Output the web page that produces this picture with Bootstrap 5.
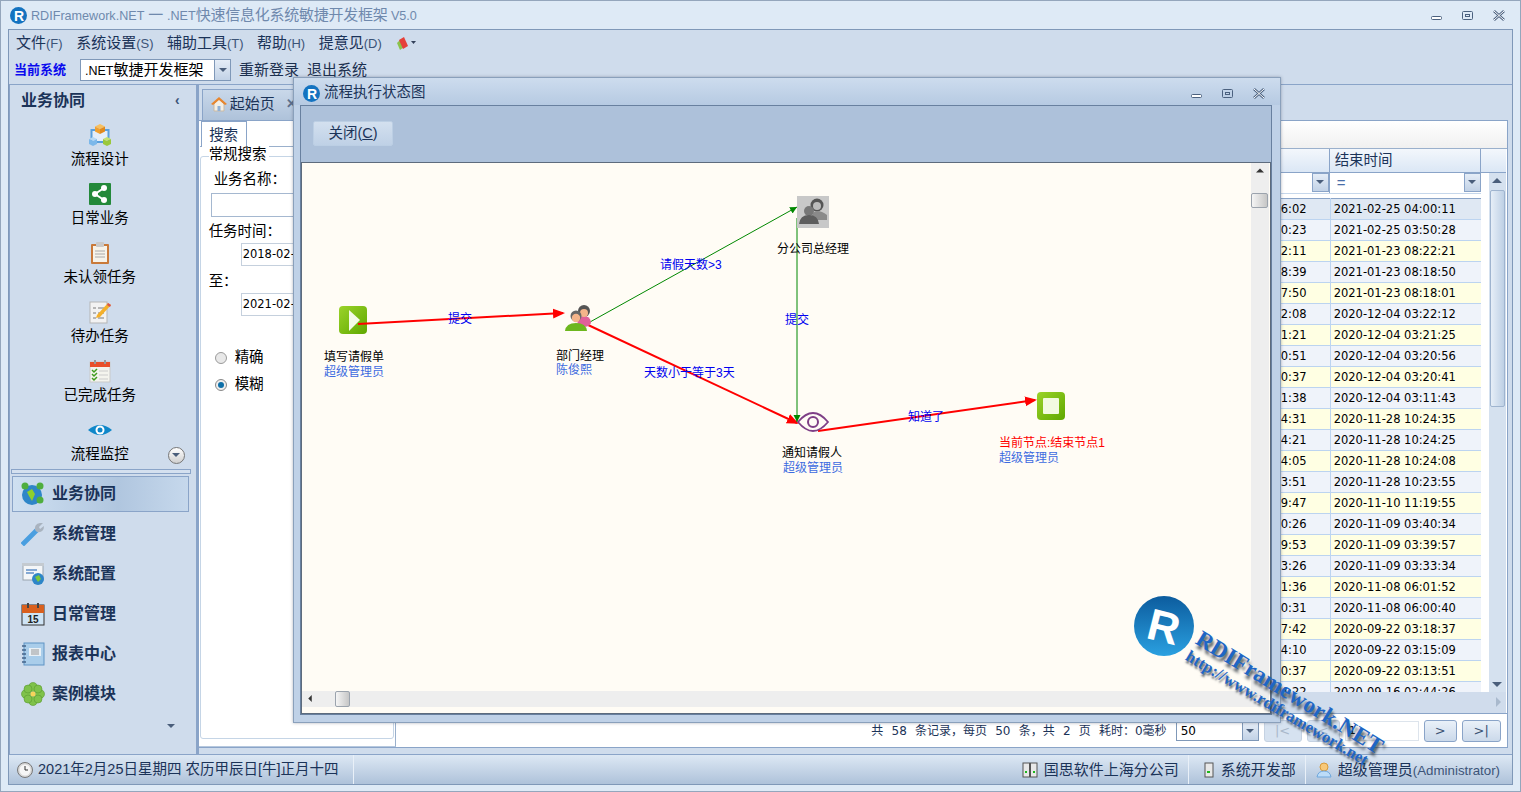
<!DOCTYPE html>
<html lang="zh-CN">
<head>
<meta charset="utf-8">
<title>RDIFramework.NET</title>
<link href="https://cdn.jsdelivr.net/npm/bootstrap@5.3.0/dist/css/bootstrap.min.css" rel="stylesheet">
<style>
html,body{margin:0;height:100%;overflow:hidden}
body{font-family:"Liberation Sans","Noto Sans CJK SC",sans-serif;font-size:14.5px;color:#1b2f4e;background:#deeaf6;line-height:1.2}
svg{display:block;flex:none}
.app-win{width:1521px;height:792px;border:1px solid #94a6bc;position:relative}
.app-title{height:28px;padding-left:9px;color:#6f89ad;font-size:12.6px}
.app-title .cn{font-size:15px;letter-spacing:-.25px}
.win-btns{margin-left:auto;padding-right:15px;gap:20px}
.frame{margin:0 7px;height:756px;border:1px solid #7f98b8;background:#cfdcec}
.menu-row{height:26px;padding-left:7px;gap:13.5px;font-size:15px;color:#1b3358}
.menu-row span span,.lat{color:#3c5478;font-size:13px}
.tool-row{height:29px;padding-left:5px;border-bottom:1px solid #8aa4c8;font-size:15px}
.cur-sys{color:#0a0aee;font-weight:700;font-size:13px;width:66px}
.combo{height:22px;border:1px solid #7f98b8;background:#fff;color:#000}
.combo-arrow{width:16px;height:100%;background:linear-gradient(#e5edf7,#c2d2e6);border-left:1px solid #7f98b8}
.net-t{font-size:12.5px}
.tri{width:0;height:0;border-left:4px solid transparent;border-right:4px solid transparent;border-top:4px solid #4a5e7b}
.main-row{height:670px}
.side{width:190px;border-left:1px solid #8aa4c8;border-right:3px solid #8aa4c8;position:relative}
.side-head{height:30px;padding:1px 16px 0 11px;font-weight:700;font-size:16px;color:#1b3358}
.nav-big{height:59px;color:#000;font-size:14.5px;padding:8px 6px 0 0}
.nav-big svg{height:24px;margin-bottom:0}
.nav-big div{height:24px;line-height:24px}
.more-btn{position:absolute;right:11px;top:362px;width:17px;height:17px;border-radius:50%;border:1px solid #777;background:linear-gradient(#fff,#cfcfcf)}
.side-sep{height:5px;margin:0 5px 2px 1px;background:#d4e0ef;border:1px solid #8aa4c8}
.nav-row{height:40px;padding-left:11px;gap:7px;font-size:16px;font-weight:700;color:#1b3358}
.nav-row.on{height:36px;margin:0 7px 2px 2px;padding-left:8px;border:1px solid #8aa4c8;background:linear-gradient(90deg,#cfe0f1,#b0c6df 60%,#c6d8ec)}
.side-foot{padding:10px 21px 0 0}
.content{width:1316px}
.tab-strip{height:35px;padding:4px 0 0 3px}
.tab-one{width:100px;height:31px;padding-left:8px;padding-bottom:2px;gap:3px;background:linear-gradient(#c9d8ea,#aec2da);border:1px solid #8aa4c8;border-bottom:0;font-size:15px;color:#1b3358}
.panes{height:628px;width:1309px;background:#fff;border:1px solid #8aa4c8;border-left:0;overflow:hidden}
.search-pane{width:197px;position:relative;border-right:1px solid #9ab0cc;border-bottom:1px solid #b6c8de;color:#000;flex:none}
.s-field{position:absolute;left:1px;top:35px;right:1px;bottom:7px;border:1px solid #c5d5e6;border-radius:3px}
.s-tab{position:absolute;left:2px;top:0;width:46px;height:26px;border:1px solid #8aa4c8;border-bottom:0;background:#fff;line-height:26px;text-align:center;font-size:14.5px;color:#1b3358}
.s-line{position:absolute;left:1px;top:25px;right:0;border-top:1px solid #9ab0cc}
.s-t{position:absolute;font-size:14.5px;white-space:nowrap}
.s-in{position:absolute;background:#fff;border:1px solid #c5d0dd;white-space:nowrap;overflow:hidden}
.s-date{font-family:"DejaVu Sans",sans-serif;font-size:11.5px;line-height:21px;width:90px;height:23px;padding-left:1px}
.grid-pane{width:1111px}
.grid-tools{height:28px;background:linear-gradient(#fff,#f0f0f0);border-bottom:1px solid #9ab0cc;flex:none}
.grid-head{height:24px;background:linear-gradient(#f3f7fc,#dbe7f5);border-bottom:1px solid #8aa4c8;width:1110px;flex:none}
.gh-a{width:934px;border-right:1px solid #8aa4c8}
.gh-b{width:151px;border-right:1px solid #8aa4c8;padding-left:5px;font-size:14.5px;color:#1b3358;line-height:22px}
.grid-body{height:540px;width:1110px;position:relative;flex:none}
.f-btn{width:17px;height:19px;background:linear-gradient(#e5edf7,#c2d2e6);border:1px solid #8aa4c8}
.filter-eq{color:#4a6ea8;font-size:15px;line-height:20px;padding-left:7px}
.data-tbl{border-collapse:collapse;table-layout:fixed;width:1085px;font-family:"DejaVu Sans",sans-serif;font-size:11.5px;color:#000;margin-top:4px;border-top:1px solid #8aa4c8}
.data-tbl td{height:21px;padding:2px 0 0;border:1px solid #bcd4f0;border-top:0;white-space:nowrap;overflow:hidden}
.data-tbl td.ca{width:934px;text-align:right;padding-right:23px}
.data-tbl td.cb{width:151px;padding-left:3px}
.r-sel td{background:#dfe8f3}.r-b td{background:#eff3fa}.r-y td{background:#ffffe3}
.tbl-clip{height:498px;overflow:hidden}
.v-scroll{position:absolute;right:0;top:0;width:25px;height:519px;padding-left:8px;background:#fff}
.vs-in{height:100%;background:#d5e1ef;position:relative}
.vs-thumb{position:absolute;left:1px;right:1px;top:17px;height:217px;border:1px solid #9fb4cf;border-radius:2px;background:linear-gradient(90deg,#e6eef7,#bed0e5)}
.up{width:0;height:0;border-left:5px solid transparent;border-right:5px solid transparent;border-bottom:5px solid #4a5e7b;position:absolute;left:3px;top:5px}
.down{width:0;height:0;border-left:5px solid transparent;border-right:5px solid transparent;border-top:5px solid #4a5e7b;position:absolute;left:3px;bottom:5px}
.h-band{position:absolute;left:0;right:0;top:519px;height:21px;background:#d0dcec}
.h-band .rgt{position:absolute;right:5px;top:5px;width:0;height:0;border-top:5px solid transparent;border-bottom:5px solid transparent;border-left:5px solid #a9b9cd}
.pager{height:36px;background:#fff;border-top:1px solid #8aa4c8;font-size:12px;padding-right:6px;gap:5px;font-family:"DejaVu Sans","Noto Sans CJK SC",sans-serif;color:#1b3358;justify-content:flex-end;flex:none}
.pg-txt{font-size:12px;margin-right:4px;word-spacing:4.4px}
.pg-btn{height:22px;border:1px solid #8aa4c8;border-radius:3px;background:linear-gradient(#eaf1f9,#cbd9ea);text-align:center;line-height:20px;font-size:13px;color:#3b5374}
.pg-btn.dis{color:#a9b8ca;border-color:#c5d2e2;background:#d6e2f0}
.pg-in{height:20px;width:74px;border:1px solid #dde4ec;padding-left:3px;color:#000;font-size:11px;line-height:18px}
.status{height:30px;background:linear-gradient(#dde8f4,#aec2da);border-top:1px solid #8aa4c8;font-size:14.5px;color:#1b3358;flex:none}
.st-seg{height:100%;padding:0 9px;gap:6px;border-right:1px solid #e9f0f8;font-size:15px}
.st-seg .lat{font-size:13.3px}
.dlg{position:absolute;left:292px;top:76px;width:988px;height:646px;background:#bfd1e7;border:1px solid #8aa0bb;box-shadow:0 0 3px rgba(60,70,90,.4)}
.dlg-title{height:27px;padding:3px 0 0 9px;gap:4px;font-size:14.5px;color:#1b3358;background:linear-gradient(#cddcee,#b6cae2)}
.dlg-btns{margin-left:auto;padding-right:15px;gap:20px}
.dlg-in{margin:0 8px 0 6px;height:610px;border:1px solid #68809f;background:#adc1da}
.dlg-bar{height:57px;padding:15px 0 0 12px;border-bottom:1px solid #5d6b7d}
.dlg-close{width:80px;height:25px;border:1px solid #bccfe4;border-radius:2px;background:linear-gradient(#d3e0ef,#bfd1e6);text-align:center;line-height:23px;font-size:14.5px;color:#1b3358}
.canvas{height:551px;background:#fffcf5;position:relative;border-left:1px solid #5d6b7d;border-right:1px solid #5d6b7d;border-bottom:1px solid #5d6b7d;overflow:hidden}
.canvas>svg.edges{position:absolute;left:0;top:0}
.node-ic{position:absolute}
.lb{position:absolute;font-size:12px;white-space:nowrap;color:#000;line-height:15px;margin-top:1px}
.lb.u{color:#3d6be0}.lb.r{color:#f00}
.lb.e{color:#0000f0;transform:translateY(-50%)}
.dv-s{position:absolute;left:949px;top:0;width:18px;height:528px;background:#eeeeee}
.dh-s{position:absolute;left:0;top:528px;width:967px;height:16px;background:#eeeeee}
.sc-th{position:absolute;border:1px solid #9ba3ad;border-radius:2px;background:linear-gradient(90deg,#f5f5f5,#c6c6c6)}
.wm{position:absolute;left:0;top:0;pointer-events:none}
.wm-a{position:absolute;left:1197px;top:622px;font-family:"Liberation Serif",serif;font-weight:700;font-size:23px;letter-spacing:.2px;color:#1f66c4;white-space:nowrap;transform:rotate(31.4deg);transform-origin:0 50%;text-shadow:3px 3px 3px rgba(40,50,60,.8)}
.wm-b{position:absolute;left:1186px;top:644px;font-family:"Liberation Serif",serif;font-weight:700;font-size:16.5px;color:#1f66c4;white-space:nowrap;transform:rotate(30.6deg);transform-origin:0 50%;text-shadow:2px 2px 2px rgba(40,50,60,.7)}
</style>
</head>
<body>
<div class="app-win">
  <div class="app-title d-flex align-items-center">
    <svg width="17" height="17" viewBox="0 0 17 17" class="me-1"><circle cx="8.5" cy="8.5" r="8.5" fill="#1473c0"/><text x="4" y="14" font-family="Liberation Sans" font-weight="700" font-size="14" fill="#fff">R</text></svg>
    <span>RDIFramework.NET<span class="cn"> 一 </span>.NET<span class="cn">快速信息化系统敏捷开发框架</span> V5.0</span>
    <div class="win-btns d-flex align-items-center">
      <svg width="11" height="11" viewBox="0 0 11 11"><rect x=".5" y="6.5" width="10" height="3" rx="1" fill="#fff" stroke="#4b617f"/></svg>
      <svg width="11" height="11" viewBox="0 0 11 11"><rect x=".5" y="1.5" width="10" height="8" rx="1" fill="none" stroke="#4b617f"/><rect x="3.5" y="4.5" width="4" height="2" fill="none" stroke="#4b617f"/></svg>
      <svg width="12" height="11" viewBox="0 0 12 11"><path d="M1 1l10 9M11 1L1 10" stroke="#4b617f" stroke-width="2.6"/><path d="M1 1l10 9M11 1L1 10" stroke="#fff" stroke-width="1"/></svg>
    </div>
  </div>
  <div class="frame d-flex flex-column">
    <div class="menu-row d-flex align-items-center flex-none">
      <span>文件<span>(F)</span></span><span>系统设置<span>(S)</span></span><span>辅助工具<span>(T)</span></span><span>帮助<span>(H)</span></span><span>提意见<span>(D)</span></span>
      <svg width="22" height="16" viewBox="0 0 22 16"><path d="M2 8l4-4 3 8-4 3z" fill="#8bc34a"/><path d="M4 5l5-3 4 9-5 3z" fill="#e5413a"/><path d="M16 6h5l-2.500 3z" fill="#33415a"/></svg>
    </div>
    <div class="tool-row d-flex align-items-center flex-none">
      <span class="cur-sys">当前系统</span>
      <div class="combo d-flex align-items-center" style="width:151px"><span class="flex-grow-1 ps-1"><span class="net-t">.NET</span>敏捷开发框架</span><span class="combo-arrow d-flex align-items-center justify-content-center"><span class="tri"></span></span></div>
      <span class="ms-2">重新登录</span><span class="ms-2">退出系统</span>
    </div>
    <div class="main-row d-flex flex-none">
      <div class="side d-flex flex-column flex-none">
        <div class="side-head d-flex align-items-center justify-content-between"><span>业务协同</span><span class="lat" style="font-weight:700;font-size:14px">‹</span></div>
        <div class="nav-big text-center"><svg class="mx-auto" width="24" viewBox="0 0 24 24"><rect x="3.500" y="7" width="17" height="12" fill="#e4eefa" stroke="#5aa0dc" stroke-width="2"/><path d="M12 1l5 2.500-5 2.500-5-2.500z" fill="#f7c060"/><path d="M7 3.500l5 2.500v5l-5-2.500z" fill="#f0a030"/><path d="M17 3.500l-5 2.500v5l5-2.500z" fill="#e08a1e"/><path d="M5 14l4 2-4 2-4-2z" fill="#b5d8f5"/><path d="M1 16l4 2v5l-4-2zM9 16l-4 2v5l4-2z" fill="#7cb8ea"/><path d="M19 14l4 2-4 2-4-2z" fill="#c5e070"/><path d="M15 16l4 2v5l-4-2zM23 16l-4 2v5l4-2z" fill="#9ac83c"/></svg><div>流程设计</div></div>
        <div class="nav-big text-center"><svg class="mx-auto" width="24" viewBox="0 0 24 24"><rect x="1" y="1" width="22" height="22" rx="1" fill="#23893a"/><path d="M16 6L7 12l9 6" fill="none" stroke="#fff" stroke-width="2"/><circle cx="16" cy="6" r="3" fill="#fff"/><circle cx="7" cy="12" r="3" fill="#fff"/><circle cx="16" cy="18" r="3" fill="#fff"/></svg><div>日常业务</div></div>
        <div class="nav-big text-center"><svg class="mx-auto" width="24" viewBox="0 0 24 24"><rect x="3" y="3" width="18" height="20" rx="1" fill="#c97a3a"/><rect x="5" y="5" width="14" height="16" fill="#f6f3ea"/><rect x="8" y="1" width="8" height="5" rx="1" fill="#c9c9c9"/><path d="M7 10h10M7 13h10M7 16h10" stroke="#aaa"/></svg><div>未认领任务</div></div>
        <div class="nav-big text-center"><svg class="mx-auto" width="24" viewBox="0 0 24 24"><rect x="2" y="2" width="17" height="21" fill="#f2f2f2" stroke="#b5b5b5"/><path d="M5 8h3M5 13h3M5 18h3M10 8h6M10 13h6M10 18h6" stroke="#7a7a7a"/><path d="M9 15L20 3l3 2-11 12-4 1z" fill="#f4b02a"/><path d="M20 3l3 2-1 2-3-2z" fill="#d9534f"/></svg><div>待办任务</div></div>
        <div class="nav-big text-center"><svg class="mx-auto" width="24" viewBox="0 0 24 24"><rect x="2" y="3" width="20" height="20" fill="#f4f4ee" stroke="#c9c9c9"/><rect x="2" y="3" width="20" height="5" fill="#e8502a"/><path d="M7 1v4M17 1v4" stroke="#999" stroke-width="2"/><path d="M4 11l2 2 3-3M4 15l2 2 3-3M4 19l2 2 3-3" fill="none" stroke="#3f9c1e" stroke-width="1.500"/><path d="M11 12h9M11 16h9M11 20h9" stroke="#ccc"/></svg><div>已完成任务</div></div>
        <div class="nav-big text-center"><svg class="mx-auto" width="24" viewBox="0 0 24 24"><path d="M0 12Q12 2 24 12 12 22 0 12z" fill="#0f87c9"/><circle cx="12" cy="12" r="4.500" fill="#fff"/><circle cx="12" cy="12" r="2.500" fill="#0f87c9"/></svg><div>流程监控</div></div>
        <div class="more-btn d-flex align-items-center justify-content-center"><span class="tri"></span></div>
        <div class="side-sep"></div>
        <div class="nav-row on d-flex align-items-center"><svg width="24" height="24" viewBox="0 0 24 24"><circle cx="11" cy="13" r="10" fill="#2e86c8"/><path d="M6 10l5-3 3 5-3 7-3-5z" fill="#8ed02c"/><circle cx="4" cy="4" r="3.500" fill="#4fae3e"/><circle cx="19" cy="4" r="3.500" fill="#4fae3e"/><circle cx="19" cy="18" r="3.500" fill="#4fae3e"/></svg><span>业务协同</span></div>
        <div class="nav-row d-flex align-items-center"><svg width="24" height="24" viewBox="0 0 24 24"><path d="M3 23L1 21 15 7 17 9z" fill="#4a9fe0" stroke="#4a9fe0" stroke-width="2"/><path d="M14 8q-1-6 5-7l3 0-4 4 1 2 4-3q0 7-7 6z" fill="#a9b3bf"/></svg><span>系统管理</span></div>
        <div class="nav-row d-flex align-items-center"><svg width="24" height="24" viewBox="0 0 24 24"><rect x="2" y="2" width="20" height="16" fill="#f4f6f8" stroke="#9aa4ae"/><rect x="1" y="1" width="22" height="3" fill="#c4cad0"/><path d="M5 8h11M5 11h8" stroke="#5f8fc6" stroke-width="1.500"/><circle cx="17" cy="17" r="6" fill="#2e86c8"/><path d="M14 15l4-2 2 4-3 3z" fill="#7cc83a"/></svg><span>系统配置</span></div>
        <div class="nav-row d-flex align-items-center"><svg width="24" height="24" viewBox="0 0 24 24"><rect x="1" y="3" width="22" height="20" fill="#cfe4f5" stroke="#333"/><rect x="1" y="3" width="22" height="8" fill="#d9601e"/><path d="M7 1v5M17 1v5" stroke="#444" stroke-width="2"/><text x="12" y="21" text-anchor="middle" font-family="Liberation Sans" font-weight="700" font-size="10" fill="#222">15</text></svg><span>日常管理</span></div>
        <div class="nav-row d-flex align-items-center"><svg width="24" height="24" viewBox="0 0 24 24"><rect x="3" y="1" width="20" height="22" fill="#a9cdea" stroke="#5f93c4"/><rect x="8" y="6" width="12" height="8" fill="#e8f0f6"/><path d="M10 8h8M10 10h8M10 12h8" stroke="#999"/><path d="M1 4h4M1 8h4M1 12h4M1 16h4M1 20h4" stroke="#44648a" stroke-width="1.500"/></svg><span>报表中心</span></div>
        <div class="nav-row d-flex align-items-center"><svg width="24" height="24" viewBox="0 0 24 24"><g fill="#7fc24a" stroke="#5b9a30" stroke-width=".6"><circle cx="12" cy="5" r="4.500"/><circle cx="12" cy="19" r="4.500"/><circle cx="5" cy="12" r="4.500"/><circle cx="19" cy="12" r="4.500"/><circle cx="7" cy="7" r="4"/><circle cx="17" cy="7" r="4"/><circle cx="7" cy="17" r="4"/><circle cx="17" cy="17" r="4"/></g><circle cx="12" cy="12" r="2.500" fill="#f5d45a"/></svg><span>案例模块</span></div>
        <div class="side-foot d-flex justify-content-end"><span class="tri"></span></div>
      </div>
      <div class="content d-flex flex-column">
        <div class="tab-strip d-flex">
          <div class="tab-one d-flex align-items-center">
            <svg width="16" height="16" viewBox="0 0 16 16"><path d="M3 8v7h10V8L8 3z" fill="#f3efe6" stroke="#c9b9a3"/><path d="M0 8l8-7 8 7-2 1-6-5-6 5z" fill="#e8862e"/><rect x="6.500" y="10" width="3" height="5" fill="#8fb0d6"/></svg>
            <span>起始页</span><span class="ms-2" style="font-size:13px;font-weight:700;color:#5b6f8c">✕</span>
          </div>
        </div>
        <div class="panes d-flex">
          <div class="search-pane">
            <div class="s-field"></div>
            <div class="s-line"></div>
            <div class="s-tab">搜索</div>
            <span class="s-t" style="left:10px;top:25px;background:#fff;padding-right:2px">常规搜索</span>
            <span class="s-t" style="left:15px;top:50px">业务名称：</span>
            <div class="s-in" style="left:12px;top:72px;width:120px;height:24px;border-color:#a5b8d0"></div>
            <span class="s-t" style="left:10px;top:102px">任务时间：</span>
            <div class="s-in s-date" style="left:42px;top:122px">2018-02-25</div>
            <span class="s-t" style="left:10px;top:152px">至：</span>
            <div class="s-in s-date" style="left:42px;top:172px">2021-02-25</div>
            <svg class="position-absolute" style="left:16px;top:231px" width="12" height="12" viewBox="0 0 12 12"><circle cx="6" cy="6" r="5.500" fill="#e8e8e8" stroke="#9a9a9a"/></svg>
            <span class="s-t" style="left:36px;top:228px">精确</span>
            <svg class="position-absolute" style="left:16px;top:258px" width="12" height="12" viewBox="0 0 12 12"><circle cx="6" cy="6" r="5.500" fill="#eee" stroke="#888"/><circle cx="6" cy="6" r="3" fill="#0e6fa8"/></svg>
            <span class="s-t" style="left:36px;top:255px">模糊</span>
          </div>
          <div class="grid-pane d-flex flex-column">
            <div class="grid-tools"></div>
            <div class="grid-head d-flex"><div class="gh-a"></div><div class="gh-b">结束时间</div></div>
            <div class="grid-body">
              <div class="d-flex" style="height:21px;width:1085px;border-bottom:1px solid #c6d7eb">
                <div class="flex-grow-1 d-flex justify-content-end" style="border-right:1px solid #8aa4c8"><span class="f-btn d-flex align-items-center justify-content-center"><span class="tri"></span></span></div>
                <div class="d-flex justify-content-between" style="width:151px"><span class="filter-eq">=</span><span class="f-btn d-flex align-items-center justify-content-center"><span class="tri"></span></span></div>
              </div>
              <div class="tbl-clip">
              <table class="data-tbl"><tbody>
                <tr class="r-sel"><td class="ca">6:02</td><td class="cb">2021-02-25 04:00:11</td></tr>
                <tr class="r-b"><td class="ca">0:23</td><td class="cb">2021-02-25 03:50:28</td></tr>
                <tr class="r-y"><td class="ca">2:11</td><td class="cb">2021-01-23 08:22:21</td></tr>
                <tr class="r-b"><td class="ca">8:39</td><td class="cb">2021-01-23 08:18:50</td></tr>
                <tr class="r-y"><td class="ca">7:50</td><td class="cb">2021-01-23 08:18:01</td></tr>
                <tr class="r-b"><td class="ca">2:08</td><td class="cb">2020-12-04 03:22:12</td></tr>
                <tr class="r-y"><td class="ca">1:21</td><td class="cb">2020-12-04 03:21:25</td></tr>
                <tr class="r-b"><td class="ca">0:51</td><td class="cb">2020-12-04 03:20:56</td></tr>
                <tr class="r-y"><td class="ca">0:37</td><td class="cb">2020-12-04 03:20:41</td></tr>
                <tr class="r-b"><td class="ca">1:38</td><td class="cb">2020-12-04 03:11:43</td></tr>
                <tr class="r-y"><td class="ca">4:31</td><td class="cb">2020-11-28 10:24:35</td></tr>
                <tr class="r-b"><td class="ca">4:21</td><td class="cb">2020-11-28 10:24:25</td></tr>
                <tr class="r-y"><td class="ca">4:05</td><td class="cb">2020-11-28 10:24:08</td></tr>
                <tr class="r-b"><td class="ca">3:51</td><td class="cb">2020-11-28 10:23:55</td></tr>
                <tr class="r-y"><td class="ca">9:47</td><td class="cb">2020-11-10 11:19:55</td></tr>
                <tr class="r-b"><td class="ca">0:26</td><td class="cb">2020-11-09 03:40:34</td></tr>
                <tr class="r-y"><td class="ca">9:53</td><td class="cb">2020-11-09 03:39:57</td></tr>
                <tr class="r-b"><td class="ca">3:26</td><td class="cb">2020-11-09 03:33:34</td></tr>
                <tr class="r-y"><td class="ca">1:36</td><td class="cb">2020-11-08 06:01:52</td></tr>
                <tr class="r-b"><td class="ca">0:31</td><td class="cb">2020-11-08 06:00:40</td></tr>
                <tr class="r-y"><td class="ca">7:42</td><td class="cb">2020-09-22 03:18:37</td></tr>
                <tr class="r-b"><td class="ca">4:10</td><td class="cb">2020-09-22 03:15:09</td></tr>
                <tr class="r-y"><td class="ca">0:37</td><td class="cb">2020-09-22 03:13:51</td></tr>
                <tr class="r-b"><td class="ca">4:22</td><td class="cb">2020-09-16 02:44:26</td></tr>
              </tbody></table>
              </div>
              <div class="v-scroll"><div class="vs-in"><span class="up"></span><div class="vs-thumb"></div><span class="down"></span></div></div>
              <div class="h-band"><span class="rgt"></span></div>
            </div>
            <div class="pager d-flex align-items-center">
              <span class="pg-txt">共 58 条记录，每页 50 条，共 2 页 耗时：0毫秒</span>
              <div class="combo d-flex align-items-center" style="width:83px;height:19px;font-size:12px"><span class="flex-grow-1 ps-1">50</span><span class="combo-arrow d-flex align-items-center justify-content-center"><span class="tri"></span></span></div>
              <div class="pg-btn dis" style="width:38px">|&lt;</div>
              <div class="pg-btn dis" style="width:33px">&lt;</div>
              <div class="pg-in">1</div>
              <div class="pg-btn" style="width:33px">&gt;</div>
              <div class="pg-btn" style="width:39px">&gt;|</div>
            </div>
          </div>
        </div>
      </div>
    </div>
    <div class="status d-flex align-items-center">
      <div class="st-seg d-flex align-items-center" style="width:345px;font-size:14.5px;padding-left:8px;gap:5px"><svg width="16" height="16" viewBox="0 0 16 16"><circle cx="8" cy="8" r="7.500" fill="#d8d8d8" stroke="#777"/><circle cx="8" cy="8" r="5.500" fill="#f6f6f6"/><path d="M8 4v4h3" fill="none" stroke="#333"/></svg><span>2021年2月25日星期四 农历甲辰日[牛]正月十四</span></div>
      <div class="st-seg d-flex align-items-center ms-auto"><svg width="16" height="16" viewBox="0 0 16 16"><rect x="1" y="1" width="6.500" height="14" fill="#e8e8e8" stroke="#555"/><rect x="8.500" y="1" width="6.500" height="14" fill="#e8e8e8" stroke="#555"/><path d="M3 10h2M11 10h2" stroke="#1db81d" stroke-width="2"/></svg><span>国思软件上海分公司</span></div>
      <div class="st-seg d-flex align-items-center" style="padding-left:14px"><svg width="12" height="16" viewBox="0 0 12 16"><rect x="2" y="1" width="8" height="14" fill="#e8e8e8" stroke="#555"/><path d="M4 10h3" stroke="#1db81d" stroke-width="2"/></svg><span>系统开发部</span></div>
      <div class="st-seg d-flex align-items-center" style="border:0;padding:0 12px 0 10px"><svg width="16" height="16" viewBox="0 0 16 16"><circle cx="8" cy="5" r="4" fill="#f8c878" stroke="#d89a3a"/><path d="M1 15q1-6 7-6t7 6z" fill="#bcdcf8" stroke="#6ea7dc"/></svg><span>超级管理员<span class="lat">(Administrator)</span></span></div>
    </div>
  </div>

  <div class="dlg">
    <div class="dlg-title d-flex align-items-center">
      <svg width="17" height="17" viewBox="0 0 17 17"><circle cx="8.500" cy="8.500" r="8.500" fill="#1473c0"/><text x="4" y="14" font-family="Liberation Sans" font-weight="700" font-size="14" fill="#fff">R</text></svg>
      <span>流程执行状态图</span>
      <div class="dlg-btns d-flex align-items-center">
        <svg width="11" height="11" viewBox="0 0 11 11"><rect x=".5" y="6.500" width="10" height="3" rx="1" fill="#fff" stroke="#4b617f"/></svg>
        <svg width="11" height="11" viewBox="0 0 11 11"><rect x=".5" y="1.500" width="10" height="8" rx="1" fill="none" stroke="#4b617f"/><rect x="3.500" y="4.500" width="4" height="2" fill="none" stroke="#4b617f"/></svg>
        <svg width="12" height="11" viewBox="0 0 12 11"><path d="M1 1l10 9M11 1L1 10" stroke="#4b617f" stroke-width="2.600"/><path d="M1 1l10 9M11 1L1 10" stroke="#fff" stroke-width="1"/></svg>
      </div>
    </div>
    <div class="dlg-in">
      <div class="dlg-bar"><div class="dlg-close">关闭(<u>C</u>)</div></div>
      <div class="canvas">
        <svg class="edges" width="949" height="528" viewBox="302 163 949 528">
          <defs>
            <marker id="ar" markerWidth="6" markerHeight="6" refX="5" refY="2.500" orient="auto"><path d="M0 0l6 2.500L0 5z" fill="#f00"/></marker>
            <marker id="ag" markerWidth="8" markerHeight="8" refX="7" refY="3.500" orient="auto"><path d="M0 0l7 3.500L0 7z" fill="#080"/></marker>
          </defs>
          <path d="M590 322L797 207" stroke="#080" stroke-width="1" marker-end="url(#ag)"/>
          <path d="M586 324L797 423" stroke="#f00" stroke-width="2" marker-end="url(#ar)"/>
          <path d="M797 218L797 422" stroke="#080" stroke-width="1" marker-end="url(#ag)"/>
          <path d="M818 431L1035 400" stroke="#f00" stroke-width="2" marker-end="url(#ar)"/>
        </svg>
        <svg class="node-ic" style="left:37px;top:143px" width="28" height="28" viewBox="0 0 28 28"><defs><linearGradient id="gg" x1="0" y1="0" x2="1" y2="1"><stop offset="0" stop-color="#9bd32a"/><stop offset="1" stop-color="#5fa800"/></linearGradient></defs><rect width="28" height="28" rx="4" fill="url(#gg)"/><path d="M10 4l11 10-11 11z" fill="#f4fbe8"/></svg>
        <svg class="node-ic" style="left:263px;top:141px" width="28" height="28" viewBox="0 0 28 28"><circle cx="19" cy="7" r="6" fill="#555"/><path d="M12 21q1-9 7-9t7 6q0 4-6 5z" fill="#e0609a"/><circle cx="19" cy="9" r="4" fill="#f4b48a"/><circle cx="11" cy="12" r="5.500" fill="#666"/><circle cx="11" cy="14" r="4.200" fill="#f4b48a"/><path d="M0 27q1-8 11-8t11 8z" fill="#6db71e"/></svg>
        <svg class="node-ic" style="left:495px;top:33px" width="32" height="32" viewBox="0 0 32 32"><rect width="32" height="32" fill="#c8c8c8"/><circle cx="20" cy="9" r="6.500" fill="#555"/><circle cx="20" cy="10" r="4" fill="#bbb"/><path d="M14 24q1-9 6-9t10 4v5z" fill="#8a8a8a"/><circle cx="12" cy="15" r="5" fill="#777"/><path d="M2 28q1-9 10-9t10 9z" fill="#5d5d5d"/></svg>
        <svg class="node-ic" style="left:495px;top:248px" width="32" height="22" viewBox="0 0 32 22"><path d="M1 11Q16-7 31 11 16 29 1 11z" fill="none" stroke="#7e3f86" stroke-width="1.800"/><circle cx="16" cy="11" r="5" fill="none" stroke="#7e3f86" stroke-width="2"/></svg>
        <svg class="node-ic" style="left:735px;top:229px" width="28" height="28" viewBox="0 0 28 28"><rect width="28" height="28" rx="4" fill="url(#gg)"/><rect x="6" y="6" width="16" height="16" rx="1" fill="#f2fae0"/></svg>
        <svg class="edges" width="949" height="528" viewBox="302 163 949 528" style="position:absolute;left:0;top:0"><path d="M358 324L563 313" stroke="#f00" stroke-width="2" marker-end="url(#ar)"/></svg>

        <span class="lb" style="left:22px;top:186px">填写请假单</span><span class="lb u" style="left:22px;top:201px">超级管理员</span>
        <span class="lb" style="left:254px;top:185px">部门经理</span><span class="lb u" style="left:254px;top:199px">陈俊熙</span>
        <span class="lb" style="left:475px;top:78px">分公司总经理</span>
        <span class="lb" style="left:480px;top:282px">通知请假人</span><span class="lb u" style="left:481px;top:297px">超级管理员</span>
        <span class="lb r" style="left:697px;top:272px">当前节点:结束节点1</span><span class="lb u" style="left:697px;top:287px">超级管理员</span>

        <span class="lb e" style="left:146px;top:155px">提交</span>
        <span class="lb e" style="left:358px;top:101px">请假天数&gt;3</span>
        <span class="lb e" style="left:483px;top:156px">提交</span>
        <span class="lb e" style="left:342px;top:209px">天数小于等于3天</span>
        <span class="lb e" style="left:606px;top:253px">知道了</span>

        <div class="dv-s"><span class="up" style="border-bottom-color:#333;left:4px;transform:scale(.8)"></span><div class="sc-th" style="left:0;top:30px;width:17px;height:15px"></div></div>
        <div class="dh-s"><span class="up" style="border-bottom-color:#333;left:3px;top:5px;transform:rotate(-90deg) scale(.7)"></span><div class="sc-th" style="left:33px;top:0;width:15px;height:16px"></div></div>
      </div>
    </div>
  </div>

  <div class="wm" style="width:1521px;height:792px">
    <svg class="position-absolute" style="left:1132px;top:594px" width="62" height="62" viewBox="0 0 62 62"><defs><linearGradient id="lg" x1="0" y1="0" x2="0" y2="1"><stop offset="0" stop-color="#0c5c9e"/><stop offset="1" stop-color="#2aa0e0"/></linearGradient></defs><circle cx="31" cy="31" r="30" fill="url(#lg)"/><text x="31" y="47" text-anchor="middle" font-family="Liberation Sans" font-weight="700" font-size="44" fill="#fff" transform="rotate(14 31 31)">R</text></svg>
    <span class="wm-a">RDIFramework.NET</span>
    <span class="wm-b">http://www.rdiframework.net</span>
  </div>
</div>
</body>
</html>
